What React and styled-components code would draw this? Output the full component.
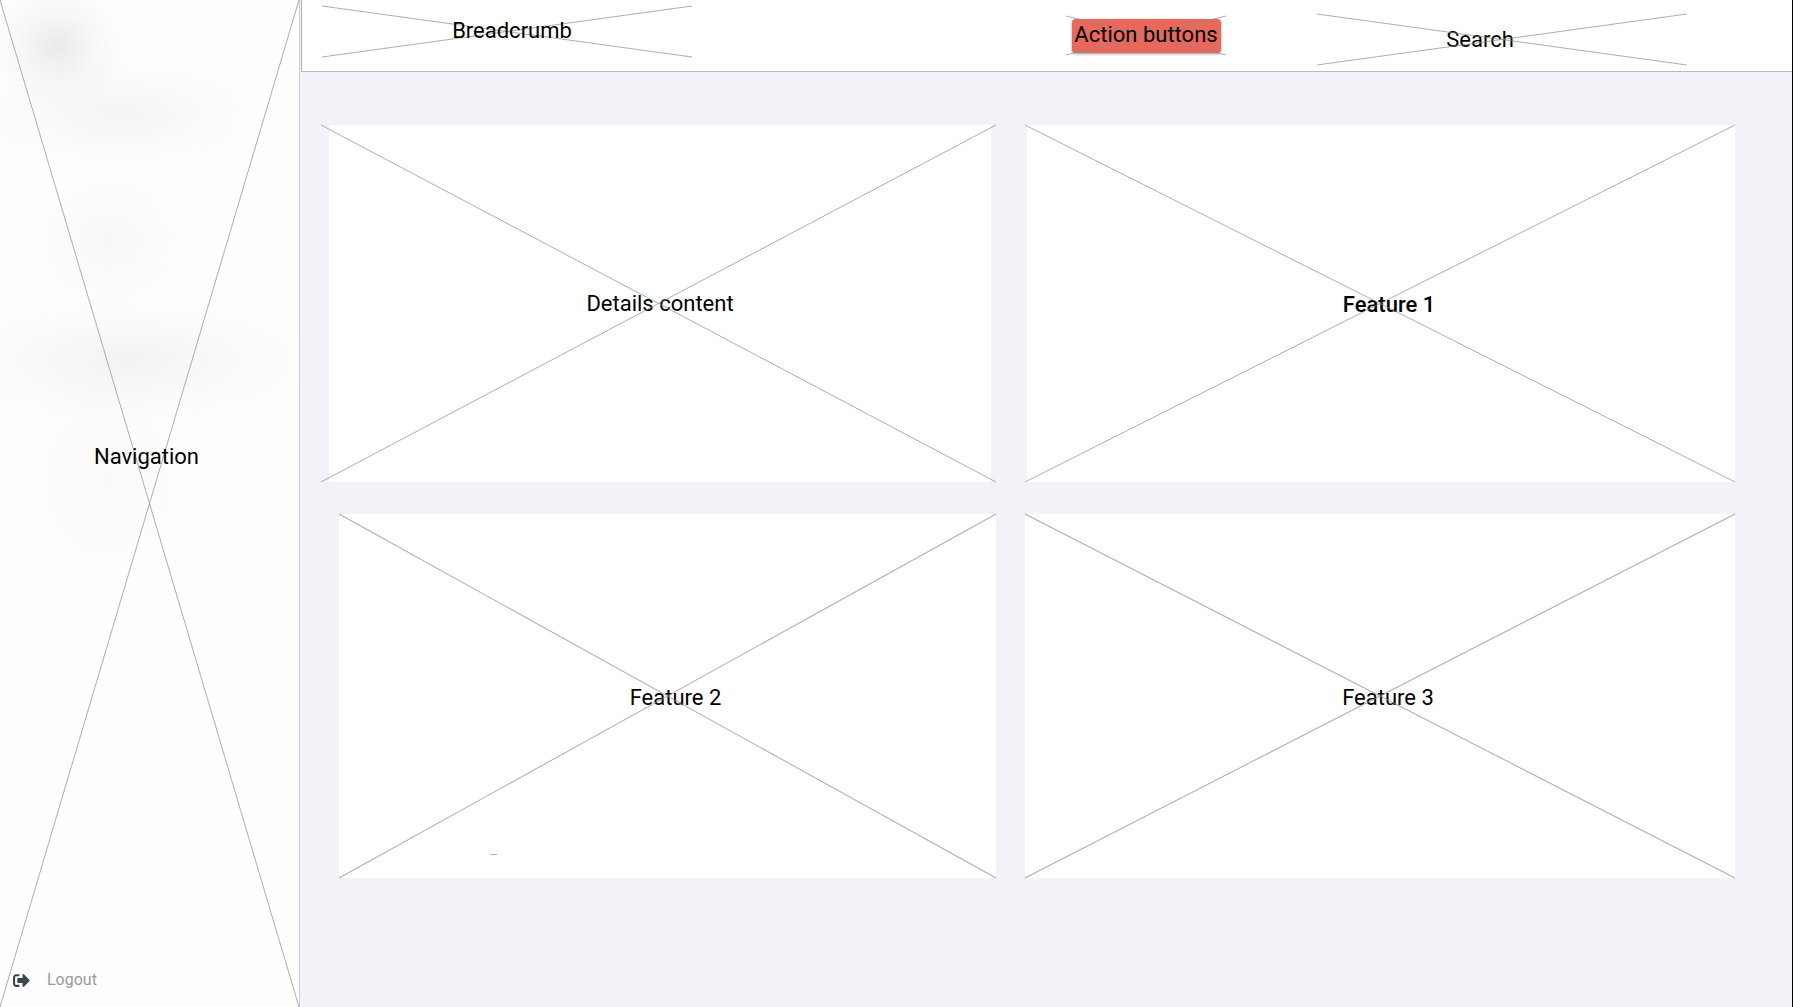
import React from "react";
import styled, { createGlobalStyle } from "styled-components";
import { FaSignOutAlt } from "react-icons/fa";

const GlobalStyle = createGlobalStyle`
  *, *::before, *::after { box-sizing: border-box; }
  body {
    margin: 0;
    background: #f2f3f8;
    color: #000;
    font-family: Roboto, "Liberation Sans", sans-serif;
    font-size: 22px;
    line-height: 28px;
  }
`;

const Shell = styled.div`
  display: grid;
  grid-template-columns: 300px minmax(0, 1fr);
  min-height: 100vh;
  border-right: 1px solid #000;
`;

const Sidebar = styled.aside`
  position: relative;
  display: flex;
  flex-direction: column;
  border-right: 1px solid #cfcfcf;
  background:
    radial-gradient(ellipse 70px 64px at 57px 46px, rgba(90, 88, 78, 0.12), rgba(90, 88, 78, 0.04) 55%, transparent),
    radial-gradient(ellipse 150px 58px at 118px 114px, rgba(80, 80, 80, 0.06), rgba(80, 80, 80, 0.025) 50%, transparent),
    radial-gradient(ellipse 84px 72px at 110px 241px, rgba(80, 80, 80, 0.035), transparent),
    radial-gradient(ellipse 190px 66px at 128px 361px, rgba(80, 80, 80, 0.065), rgba(80, 80, 80, 0.025) 55%, transparent),
    radial-gradient(ellipse 90px 110px at 108px 480px, rgba(80, 80, 80, 0.025), transparent),
    #fefefe;
`;

const NavArea = styled.nav`
  flex: 1;
  display: flex;
  align-items: center;
  justify-content: center;
  padding-right: 6px;
`;

const SidebarFooter = styled.footer`
  display: flex;
  align-items: flex-end;
  height: 93px;
  padding: 0 13px 17px;
`;

const LogoutLink = styled.a`
  position: relative;
  z-index: 1;
  display: flex;
  align-items: center;
  gap: 17px;
  color: #999;
  font-size: 16px;
  line-height: 20px;
  text-decoration: none;

  svg { color: #3a474d; font-size: 17px; }
`;

const Content = styled.div`
  display: flex;
  flex-direction: column;
  min-width: 0;
`;

const Header = styled.header`
  display: flex;
  align-items: flex-start;
  height: 72px;
  margin-left: 1px;
  padding-right: 105px;
  padding-left: 20px;
  border-bottom: 1px solid #b9bbb9;
  border-left: 1px solid #b0b0b0;
  background: #fff;
`;

const Slot = styled.div`
  position: relative;
  display: flex;
  align-items: center;
  justify-content: center;
  flex: none;
  width: ${(p) => p.$width};
  height: ${(p) => p.$height};
  margin-top: ${(p) => p.$top};
  margin-left: ${(p) => p.$before || 0};
`;

const Breadcrumb = styled.nav`
  padding-left: 10px;
  padding-bottom: 2px;
`;

const ActionButton = styled.button`
  display: flex;
  align-items: center;
  justify-content: center;
  width: 149px;
  height: 34px;
  padding: 0 0 2px;
  border: 0;
  border-radius: 4px;
  background: #e8685b;
  box-shadow: 0 1px 3px rgba(0, 0, 0, 0.4);
  color: #000;
  font: inherit;
  white-space: nowrap;
`;

const SearchInput = styled.input`
  width: 100%;
  height: 100%;
  padding: 0 44px 0 0;
  border: 0;
  background: transparent;
  color: #000;
  font: inherit;
  text-align: center;

  &::placeholder { color: #000; opacity: 1; }
`;

const Board = styled.main`
  display: grid;
  grid-template-columns: minmax(0, 675fr) minmax(0, 710fr);
  gap: 32px 29px;
  padding: 53px 57px 48px 21px;
`;

const Panel = styled.section`
  position: relative;
  display: flex;
  min-height: ${(p) => p.$height};
  margin-left: ${(p) => p.$indent || 0};
`;

const Surface = styled.div`
  flex: 1;
  display: flex;
  align-items: center;
  justify-content: center;
  margin: ${(p) => p.$inset || 0};
  padding: ${(p) => (p.$feature ? "3px 0 0 16px" : 0)};
  background: #fff;
`;

const Title = styled.h2`
  margin: 0;
  font-size: inherit;
  font-weight: ${(p) => (p.$strong ? 500 : 400)};
`;

const Label = styled.span`
  position: relative;
  z-index: 1;
`;

const Dash = styled.span`
  position: absolute;
  bottom: 23px;
  left: 23%;
  width: 7px;
  height: 1px;
  background: #b5b5b5;
`;

const CrossSvg = styled.svg`
  position: absolute;
  inset: 0;
  width: 100%;
  height: 100%;
  overflow: visible;
  pointer-events: none;
`;

function Cross() {
  return (
    <CrossSvg viewBox="0 0 100 100" preserveAspectRatio="none" aria-hidden="true">
      <path d="M0 0L100 100M0 100L100 0" fill="none" stroke="#8c8c8c" strokeOpacity="0.7" strokeWidth="1" vectorEffect="non-scaling-stroke" />
    </CrossSvg>
  );
}

export default function App() {
  return (
    <>
      <GlobalStyle />
      <Shell>
        <Sidebar>
          <Cross />
          <NavArea><Label>Navigation</Label></NavArea>
          <SidebarFooter>
            <LogoutLink href="#logout"><FaSignOutAlt aria-hidden="true" />Logout</LogoutLink>
          </SidebarFooter>
        </Sidebar>
        <Content>
          <Header>
            <Slot $width="370px" $height="51px" $top="6px">
              <Cross />
              <Breadcrumb aria-label="Breadcrumb"><Label>Breadcrumb</Label></Breadcrumb>
            </Slot>
            <Slot $width="160px" $height="39px" $top="16px" $before="auto">
              <ActionButton type="button"><Label>Action buttons</Label></ActionButton>
              <Cross />
            </Slot>
            <Slot as="label" $width="370px" $height="51px" $top="14px" $before="91px">
              <Cross />
              <SearchInput type="text" aria-label="Search" placeholder="Search" />
            </Slot>
          </Header>
          <Board>
            <Panel $height="357px">
              <Surface $inset="0 5px 0 8px"><Title>Details content</Title></Surface>
              <Cross />
            </Panel>
            <Panel $height="357px">
              <Surface $inset="0 0 0 2px" $feature><Title $strong>Feature 1</Title></Surface>
              <Cross />
            </Panel>
            <Panel $height="364px" $indent="18px">
              <Surface $feature><Title>Feature 2</Title></Surface>
              <Cross />
              <Dash />
            </Panel>
            <Panel $height="364px">
              <Surface $feature><Title>Feature 3</Title></Surface>
              <Cross />
            </Panel>
          </Board>
        </Content>
      </Shell>
    </>
  );
}
